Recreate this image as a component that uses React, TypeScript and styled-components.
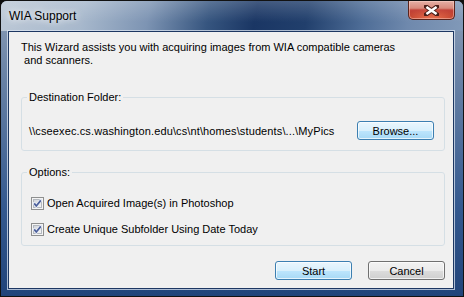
import styled, { createGlobalStyle } from 'styled-components';

const GlobalStyle = createGlobalStyle`
  html, body {
    margin: 0;
    padding: 0;
    background: #0e0e0e;
    overflow: hidden;
  }
  body {
    font-family: 'Liberation Sans', Arial, sans-serif;
    font-size: 11px;
    color: #000;
  }
`;

interface ButtonProps {
  $primary?: boolean;
}

function CheckMark() {
  return (
    <svg width="13" height="13" viewBox="0 0 13 13">
      <defs>
        <linearGradient id="cbInner" x1="0" y1="0" x2="1" y2="1">
          <stop offset="0" stopColor="#cfd3d9" />
          <stop offset="1" stopColor="#f7f7f7" />
        </linearGradient>
      </defs>
      <rect x="0.5" y="0.5" width="12" height="12" fill="#f4f4f4" stroke="#8e8f8f" />
      <rect x="2.5" y="2.5" width="8" height="8" fill="url(#cbInner)" stroke="#b3b8bf" />
      <path d="M3.2 6.4 L5.3 9 L9.8 3.4" fill="none" stroke="#e8ecf5" strokeWidth="3" strokeLinecap="round" />
      <path d="M3.2 6.4 L5.3 9 L9.8 3.4" fill="none" stroke="#4b5f9b" strokeWidth="1.7" />
    </svg>
  );
}

function CloseGlyph() {
  return (
    <svg width="15" height="11" viewBox="0 0 15 11">
      <path
        d="M2 1.5 L13 9.5 M13 1.5 L2 9.5"
        stroke="#4a1e18"
        strokeWidth="4.4"
        strokeLinecap="square"
      />
      <path d="M2.4 2 L12.6 9 M12.6 2 L2.4 9" stroke="#ffffff" strokeWidth="2.6" />
    </svg>
  );
}

function App() {
  return (
    <>
      <GlobalStyle />
      <Window>
        <TitleBar>
          <Title>WIA Support</Title>
          <CloseButton aria-label="Close">
            <CloseGlyph />
          </CloseButton>
        </TitleBar>

        <Client>
          <Intro>
            This Wizard assists you with acquiring images from WIA compatible cameras
            <br />
            &nbsp;and scanners.
          </Intro>

          {/* Destination folder */}
          <Group $top={24}>
            <Legend>Destination Folder:</Legend>
            <FolderRow>
              <PathText>
                \\cseexec.cs.washington.edu\cs\nt\homes\students\...\MyPics
              </PathText>
              <Button $primary>Browse...</Button>
            </FolderRow>
          </Group>

          {/* Options */}
          <Group $top={15}>
            <Legend>Options:</Legend>
            <OptionList>
              <Option>
                <CheckMark />
                <span>Open Acquired Image(s) in Photoshop</span>
              </Option>
              <Option>
                <CheckMark />
                <span>Create Unique Subfolder Using Date Today</span>
              </Option>
            </OptionList>
          </Group>

          <Footer>
            <Button $primary>Start</Button>
            <Button>Cancel</Button>
          </Footer>
        </Client>
      </Window>
    </>
  );
}

const Window = styled.div`
  box-sizing: border-box;
  width: 464px;
  height: 297px;
  display: flex;
  flex-direction: column;
  border: 1px solid #121212;
  border-radius: 7px 7px 0 0;
  background: linear-gradient(
    to bottom,
    #8d9fb7 0%,
    #6a83a6 25%,
    #34598f 70%,
    #21447a 100%
  );
  overflow: hidden;
`;

const TitleBar = styled.div`
  height: 30px;
  flex: none;
  display: flex;
  align-items: flex-start;
  justify-content: space-between;
  padding: 0 8px 0 8px;
  background:
    linear-gradient(to bottom, rgba(255, 255, 255, 0.18), rgba(255, 255, 255, 0) 70%),
    linear-gradient(
      100deg,
      #bcc8d6 0%,
      #a7b8cc 18%,
      #7d94b3 32%,
      #36557f 45%,
      #1a3664 55%,
      #213f6c 66%,
      #4d6c96 78%,
      #6f89ad 88%,
      #8199b8 100%
    );
`;

const Title = styled.span`
  margin-top: 8px;
  font-size: 12px;
  line-height: 14px;
  color: #000;
  text-shadow:
    0 0 6px rgba(255, 255, 255, 0.95),
    0 0 12px rgba(255, 255, 255, 0.8);
`;

const CloseButton = styled.button`
  box-sizing: border-box;
  width: 47px;
  height: 19px;
  padding: 0;
  display: flex;
  align-items: center;
  justify-content: center;
  border: 1px solid #5a241c;
  border-top: none;
  border-radius: 0 0 5px 5px;
  background:
    radial-gradient(ellipse 70% 55% at 50% 100%, rgba(255, 140, 100, 0.75), rgba(255, 120, 90, 0) 100%),
    linear-gradient(to bottom, #e6b0a6 0%, #d98a7c 40%, #c4453a 50%, #b12e1c 100%);
  box-shadow: inset 0 0 0 1px rgba(255, 220, 210, 0.45);
`;

const Client = styled.div`
  flex: 1;
  display: flex;
  flex-direction: column;
  margin: 0 9px 7px 7px;
  padding: 9px 8px 0 12px;
  background: #f0f0f0;
  border: 1px solid #1d3762;
  box-shadow: 0 0 0 1px rgba(220, 230, 242, 0.75);
`;

const Intro = styled.p`
  margin: 0;
  line-height: 13px;
`;

const Group = styled.fieldset<{ $top: number }>`
  margin: ${(p) => p.$top}px 0 0 0;
  padding: 0 10px 10px 7px;
  border: 1px solid #d5dfe5;
  border-radius: 3px;
  min-width: 0;
`;

const Legend = styled.legend`
  padding: 0 2px;
  margin-left: -2px;
  line-height: 13px;
`;

const FolderRow = styled.div`
  display: flex;
  align-items: center;
  justify-content: space-between;
  margin-top: 17px;
`;

const PathText = styled.span`
  white-space: nowrap;
  letter-spacing: 0.12px;
`;

const OptionList = styled.div`
  display: flex;
  flex-direction: column;
  gap: 10px;
  padding: 16px 0 0 2px;
  margin-bottom: -2px;
`;

const Option = styled.label`
  display: flex;
  align-items: center;
  gap: 3px;
  height: 16px;

  svg {
    flex: none;
  }
`;

const Footer = styled.div`
  display: flex;
  justify-content: flex-end;
  gap: 16px;
  margin-top: 15px;
`;

const Button = styled.button<ButtonProps>`
  box-sizing: border-box;
  width: 77px;
  height: 19px;
  padding: 0;
  font-family: 'Liberation Sans', Arial, sans-serif;
  font-size: 11px;
  color: #000;
  border-radius: 3px;
  border: 1px solid ${(p) => (p.$primary ? '#3c7fb1' : '#707070')};
  background: ${(p) =>
    p.$primary
      ? 'linear-gradient(to bottom, #eaf6fd 0%, #d9f0fc 50%, #bee6fd 50%, #a7d9f5 100%)'
      : 'linear-gradient(to bottom, #f2f2f2 0%, #ebebeb 50%, #dddddd 50%, #cfcfcf 100%)'};
  box-shadow: inset 0 0 0 1px rgba(255, 255, 255, 0.7);
`;

export default App;
